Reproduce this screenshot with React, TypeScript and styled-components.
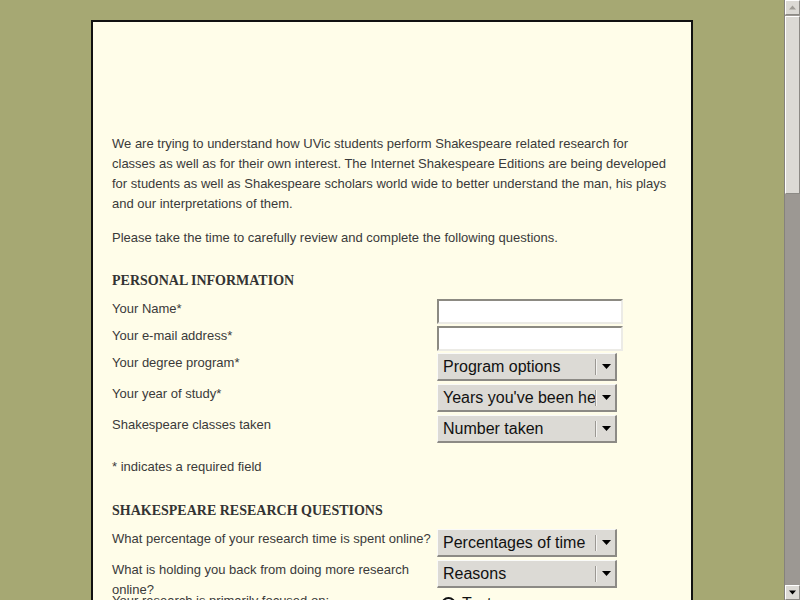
import React, { FC } from "react"
import styled, { createGlobalStyle } from "styled-components"

const GlobalStyle = createGlobalStyle`
  html, body {
    margin: 0;
    padding: 0;
    height: 100%;
    overflow: hidden;
  }
  body {
    background-color: #a6a873;
    font-family: "Liberation Sans", Arial, sans-serif;
  }
  #root {
    height: 100%;
  }
`

// layout
const Screen = styled.div`
  display: flex;
  height: 100vh;
`

const Viewport = styled.div`
  flex: 1;
  overflow: hidden;
`

const Survey = styled.div`
  width: 560px;
  min-height: 1880px;
  margin: 20px auto 20px;
  padding: 0 19px;
  background-color: #fffde9;
  border: 2px solid #111;
  color: #3a3a3a;
  font-size: 13px;
  line-height: 20px;
`

// header image never loaded, only its space is left
const Banner = styled.div`
  height: 112px;
`

const Para = styled.p`
  margin: 0 0 14px;
`

const Section = styled.h2<{ $top: number }>`
  margin: ${(p) => p.$top}px 0 8px;
  font-family: "Liberation Serif", "Times New Roman", serif;
  font-size: 14px;
  font-weight: bold;
  line-height: 20px;
  color: #333;
`

const Row = styled.div<{ $h: number }>`
  display: flex;
  align-items: flex-start;
  height: ${(p) => p.$h}px;
`

const Label = styled.label`
  width: 325px;
  flex: none;
`

const Note = styled.div`
  margin-top: 11px;
`

// controls
const TextInput = styled.input`
  box-sizing: border-box;
  width: 186px;
  height: 25px;
  margin: 0;
  padding: 0 4px;
  background: #fff;
  border-style: solid;
  border-width: 2px;
  border-color: #8c8a82 #ecebe6 #ecebe6 #8c8a82;
  font: 13px "Liberation Sans", Arial, sans-serif;
`

const Combo = styled.div`
  box-sizing: border-box;
  display: flex;
  align-items: center;
  width: 180px;
  height: 28px;
  background: #dcdad5;
  border-style: solid;
  border-width: 1px 2px 2px 1px;
  border-color: #fafaf8 #8c8a85 #8c8a85 #fafaf8;
  color: #111;
  font-size: 16px;
  line-height: 20px;
`

const ComboText = styled.span`
  flex: 1;
  padding-left: 5px;
  white-space: nowrap;
  overflow: hidden;
`

const ComboSep = styled.span`
  width: 1px;
  height: 16px;
  background: #9b9893;
  border-right: 1px solid #f4f3f1;
`

const ComboArrow = styled.span`
  width: 18px;
  display: flex;
  justify-content: center;
`

const RadioLine = styled.div`
  display: flex;
  align-items: center;
  gap: 6px;
  padding: 4px 0 0 4px;
  font-size: 16px;
  line-height: 18px;
  color: #111;
`

const RadioDot = styled.span`
  box-sizing: border-box;
  width: 15px;
  height: 15px;
  border-radius: 50%;
  border: 2px solid #111;
  background: radial-gradient(circle, #111 0 3px, #fff 3.5px);
`

// scrollbar
const ScrollBar = styled.div`
  width: 16px;
  flex: none;
  display: flex;
  flex-direction: column;
  background: #9c9893;
  border-left: 1px solid #85827c;
  box-sizing: border-box;
`

const ScrollButton = styled.div`
  height: 15px;
  display: flex;
  align-items: center;
  justify-content: center;
  background: #dcdad5;
  border: 1px solid;
  border-color: #fff #8c8a85 #8c8a85 #fff;
  box-sizing: border-box;
`

const Thumb = styled.div`
  height: 178px;
  margin-top: 1px;
  background: #dcdad5;
  border: 1px solid;
  border-color: #fff #8c8a85 #8c8a85 #fff;
  box-sizing: border-box;
`

const Track = styled.div`
  flex: 1;
`

const Caret: FC<{ up?: boolean; color: string; w?: number }> = ({ up, color, w = 9 }) => (
  <svg width={w} height={5} viewBox="0 0 9 5">
    <path d={up ? "M0 5 L4.5 0 L9 5 Z" : "M0 0 L9 0 L4.5 5 Z"} fill={color} />
  </svg>
)

const Select: FC<{ text: string }> = ({ text }) => (
  <Combo role="listbox">
    <ComboText>{text}</ComboText>
    <ComboSep />
    <ComboArrow>
      <Caret color="#000" />
    </ComboArrow>
  </Combo>
)

const App: FC = (): JSX.Element => {
  return (
    <Screen>
      <GlobalStyle />
      <Viewport>
        <Survey>
          <Banner />
          <Para>
            We are trying to understand how UVic students perform Shakespeare related research for
            classes as well as for their own interest. The Internet Shakespeare Editions are being
            developed for students as well as Shakespeare scholars world wide to better understand
            the man, his plays and our interpretations of them.
          </Para>
          <Para>Please take the time to carefully review and complete the following questions.</Para>

          <Section $top={23}>PERSONAL INFORMATION</Section>
          <Row $h={27}>
            <Label>Your Name*</Label>
            <TextInput type="text" />
          </Row>
          <Row $h={27}>
            <Label>Your e-mail address*</Label>
            <TextInput type="text" />
          </Row>
          <Row $h={31}>
            <Label>Your degree program*</Label>
            <Select text="Program options" />
          </Row>
          <Row $h={31}>
            <Label>Your year of study*</Label>
            <Select text="Years you've been here" />
          </Row>
          <Row $h={31}>
            <Label>Shakespeare classes taken</Label>
            <Select text="Number taken" />
          </Row>
          <Note>* indicates a required field</Note>

          <Section $top={24}>SHAKESPEARE RESEARCH QUESTIONS</Section>
          <Row $h={31}>
            <Label>What percentage of your research time is spent online?</Label>
            <Select text="Percentages of time" />
          </Row>
          <Row $h={31}>
            <Label>What is holding you back from doing more research online?</Label>
            <Select text="Reasons" />
          </Row>
          <Row $h={31}>
            <Label>Your research is primarily focused on:</Label>
            <RadioLine>
              <RadioDot />
              Text
            </RadioLine>
          </Row>
        </Survey>
      </Viewport>

      <ScrollBar>
        <ScrollButton>
          <Caret up color="#a09d97" w={7} />
        </ScrollButton>
        <Thumb />
        <Track />
        <ScrollButton>
          <Caret color="#000" w={7} />
        </ScrollButton>
      </ScrollBar>
    </Screen>
  )
}

export default App
